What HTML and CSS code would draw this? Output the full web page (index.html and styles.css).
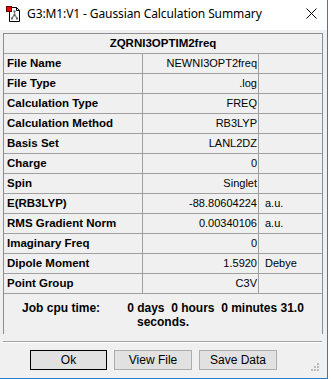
FILE: index.html
```html
<!DOCTYPE html>
<html lang="en">
<head>
    <meta charset="UTF-8">
    <title>G3:M1:V1 - Gaussian Calculation Summary</title>
    <link rel="stylesheet" href="styles.css">
</head>
<body>
    <div class="window">
        <div class="titlebar">
            <svg class="app-icon" width="15" height="16" viewBox="0 0 15 16">
                <path d="M3.5 1.5 H10.5 L13.5 4.5 V15.5 H3.5 Z" fill="#fff" stroke="#000"/>
                <path d="M10.5 1.5 V4.5 H13.5" fill="none" stroke="#000"/>
                <path d="M8.5 5 V9 M8.5 9 L6 12 M8.5 9 L11 12" stroke="#888" stroke-width="1.2" fill="none"/>
                <rect x="7.5" y="4.5" width="2" height="2" fill="#666"/>
                <rect x="7.5" y="8" width="2" height="2" fill="#666"/>
                <rect x="5" y="11.5" width="2" height="2" fill="#666"/>
                <rect x="10" y="11.5" width="2" height="2" fill="#666"/>
                <rect x="0.5" y="0.5" width="5" height="5" fill="#e00" stroke="#600"/>
            </svg>
            <span class="title-text">G3:M1:V1 - Gaussian Calculation Summary</span>
            <svg class="close-icon" width="11" height="11" viewBox="0 0 11 11">
                <path d="M0.5 0.5 L10.5 10.5 M10.5 0.5 L0.5 10.5" stroke="#000" stroke-width="1"/>
            </svg>
        </div>

        <div class="client">
            <div class="summary">
                <div class="cell head">ZQRNI3OPTIM2freq</div>

                <div class="cell label">File Name</div>
                <div class="cell value">NEWNI3OPT2freq</div>
                <div class="cell unit"></div>

                <div class="cell label">File Type</div>
                <div class="cell value">.log</div>
                <div class="cell unit"></div>

                <div class="cell label">Calculation Type</div>
                <div class="cell value">FREQ</div>
                <div class="cell unit"></div>

                <div class="cell label">Calculation Method</div>
                <div class="cell value">RB3LYP</div>
                <div class="cell unit"></div>

                <div class="cell label">Basis Set</div>
                <div class="cell value">LANL2DZ</div>
                <div class="cell unit"></div>

                <div class="cell label">Charge</div>
                <div class="cell value">0</div>
                <div class="cell unit"></div>

                <div class="cell label">Spin</div>
                <div class="cell value">Singlet</div>
                <div class="cell unit"></div>

                <div class="cell label">E(RB3LYP)</div>
                <div class="cell value">-88.80604224</div>
                <div class="cell unit">a.u.</div>

                <div class="cell label">RMS Gradient Norm</div>
                <div class="cell value">0.00340106</div>
                <div class="cell unit">a.u.</div>

                <div class="cell label">Imaginary Freq</div>
                <div class="cell value">0</div>
                <div class="cell unit"></div>

                <div class="cell label">Dipole Moment</div>
                <div class="cell value">1.5920</div>
                <div class="cell unit">Debye</div>

                <div class="cell label">Point Group</div>
                <div class="cell value">C3V</div>
                <div class="cell unit"></div>

                <div class="cell cpu">
                    <div class="cpu-line"><span class="cpu-label">Job cpu time:</span><span>0 days&nbsp;&nbsp;0 hours&nbsp;&nbsp;0 minutes 31.0</span></div>
                    <div class="cpu-line">seconds.</div>
                </div>
            </div>

            <div class="separator"></div>

            <div class="buttons">
                <button class="btn focused">Ok</button>
                <button class="btn">View File</button>
                <button class="btn">Save Data</button>
            </div>

            <svg class="grip" width="9" height="9" viewBox="0 0 9 9">
                <rect x="6" y="0" width="2" height="2" fill="#bcbcbc"/>
                <rect x="3" y="3" width="2" height="2" fill="#bcbcbc"/>
                <rect x="6" y="3" width="2" height="2" fill="#bcbcbc"/>
                <rect x="0" y="6" width="2" height="2" fill="#bcbcbc"/>
                <rect x="3" y="6" width="2" height="2" fill="#bcbcbc"/>
                <rect x="6" y="6" width="2" height="2" fill="#bcbcbc"/>
            </svg>
        </div>
    </div>
</body>
</html>
```

FILE: styles.css
```css
body {
    margin: 0;
    background: #fff;
    font-family: 'Liberation Sans', Arial, sans-serif;
}

.window {
    width: 327px;
    height: 378px;
    border-right: 1px solid #2b7dcc;
    border-bottom: 1px solid #2b7dcc;
    background: #f0f0f0;
    display: flex;
    flex-direction: column;
}

.titlebar {
    height: 30px;
    background: #fff;
    display: flex;
    align-items: center;
    position: relative;
}

.app-icon {
    margin-left: 6px;
    margin-top: -3px;
}

.title-text {
    margin-left: 6px;
    font-family: 'Noto Sans', 'Open Sans', sans-serif;
    font-size: 12px;
    color: #000;
    margin-top: -3px;
    letter-spacing: -0.1px;
}

.close-icon {
    position: absolute;
    left: 306px;
    top: 8px;
}

.client {
    flex: 1;
    position: relative;
    padding: 3px 0 0 3px;
}

.summary {
    width: 318px;
    display: grid;
    grid-template-columns: 138px 115px 1fr;
    grid-auto-rows: 19px;
    gap: 1px;
    background: #a0a0a0;
    border: 1px solid #8d8d8d;
    font-size: 11px;
    color: #000;
}

.cell {
    background: #f0f0f0;
    line-height: 19px;
    white-space: nowrap;
}

.head {
    grid-column: 1 / 4;
    text-align: center;
    font-weight: bold;
    font-size: 11.5px;
}

.label {
    padding-left: 3px;
    font-weight: bold;
    font-size: 11.5px;
}

.value {
    text-align: right;
    padding-right: 1px;
}

.unit {
    padding-left: 6px;
}

.cpu {
    grid-column: 1 / 4;
    grid-row: span 2;
    height: 41px;
    text-align: center;
    font-weight: bold;
    font-size: 12px;
    line-height: 14px;
    padding-top: 7px;
    box-sizing: border-box;
}

.cpu-label {
    margin-right: 27px;
}

.separator {
    width: 319px;
    margin-top: 7px;
    border-top: 1px solid #a0a0a0;
    border-bottom: 1px solid #fff;
}

.buttons {
    display: flex;
    gap: 7px;
    margin-top: 7px;
    padding-left: 27px;
}

.btn {
    width: 78px;
    height: 20px;
    padding: 0;
    background: #e1e1e1;
    border: 1px solid #adadad;
    font-family: 'Liberation Sans', Arial, sans-serif;
    font-size: 12px;
    color: #000;
}

.btn.focused {
    width: 77px;
    outline: 1px dotted #000;
    outline-offset: -1px;
    border-color: #000;
}

.grip {
    position: absolute;
    left: 311px;
    top: 333px;
}
```
